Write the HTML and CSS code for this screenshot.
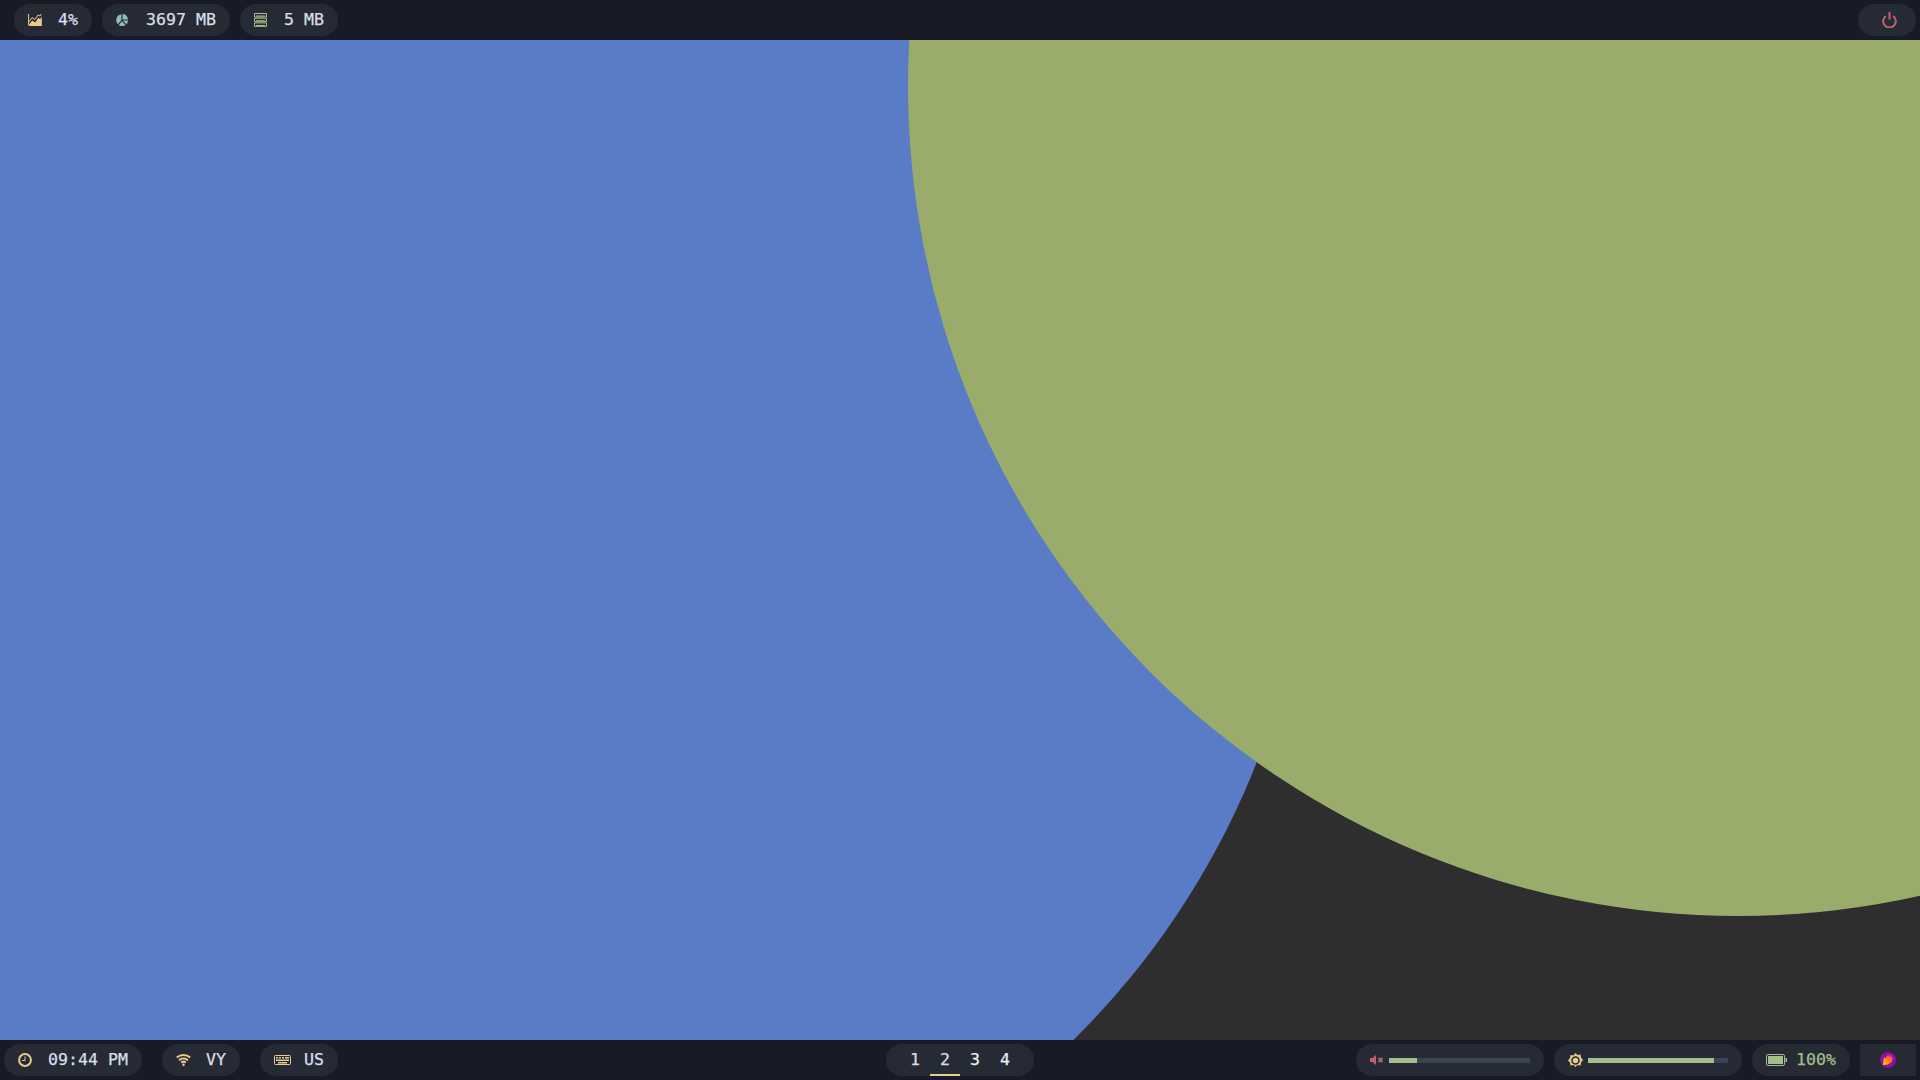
FILE: index.html
```html
<!doctype html>
<html lang="en">
<head>
  <meta charset="UTF-8">
  <meta name="viewport" content="width=device-width, initial-scale=1">
  <title>Desktop</title>
  <link rel="stylesheet" href="styles.css">
</head>
<body>

<header class="bar bar-top">
  <div class="group">
    <div class="pill stat w78">
      <svg width="14" height="12" viewBox="0 0 14 12">
        <path class="yellow-fill" d="M1.200 12V10.600L4.200 6.600l3 2 3-4.600 2 1L13.800 2.600V12z"/>
        <path class="yellow-line" d="M.6 0V11.400M.6 8.200L4 3.600l3 2L10 1l2 1L13.500 0"/>
      </svg>
      <span>4%</span>
    </div>
    <div class="pill stat w128">
      <svg width="12" height="12" viewBox="0 0 12 12">
        <path class="teal-fill" d="M5.300.2V6.200L1.800 10.200A6 6 0 0 1 5.300.2zM6.500 0A6 6 0 0 1 12 5.400H6.500zM6.600 6.500H12a6 6 0 0 1-1.600 3.800zM5.900 7.200l3.600 3.900A6 6 0 0 1 2.700 11z"/>
      </svg>
      <span>3697 MB</span>
    </div>
    <div class="pill stat w98">
      <svg width="13" height="14" viewBox="0 0 13 14">
        <path class="green-line" d="M.5.500h12v3.500H.5zM.5 5.200h12v3.500H.5zM.5 9.900h12v3.500H.5z"/>
        <path class="green-fill" d="M2 2.500h9v1H2zM2 7.200h9v1H2zM2 11.900h9v1H2z"/>
      </svg>
      <span>5 MB</span>
    </div>
  </div>
  <div class="group">
    <div class="pill pill-power">
      <svg width="15" height="16" viewBox="0 0 15 16">
        <path class="red-line wide" d="M3.800 4a6.300 6.300 0 1 0 7.400 0M7.500 0v7.500"/>
      </svg>
    </div>
  </div>
</header>

<div class="wallpaper">
  <svg width="1920" height="1000" viewBox="0 40 1920 1000">
    <rect y="40" width="1920" height="1000" fill="#2e2e2e"/>
    <circle cx="512" cy="470" r="800" fill="#5a7bc5"/>
    <circle cx="1738" cy="86" r="830" fill="#9aac6c"/>
  </svg>
</div>

<footer class="bar bar-bottom">
  <div class="group group-wide">
    <div class="pill stat w138">
      <svg width="14" height="14" viewBox="0 0 14 14">
        <circle class="yellow-line wide" cx="7" cy="7" r="5.900"/>
        <path class="yellow-line" d="M7 3.500V7.500H4"/>
      </svg>
      <span>09:44 PM</span>
    </div>
    <div class="pill stat w78">
      <svg width="15" height="12" viewBox="0 0 15 12">
        <path class="yellow-line wide" d="M.8 3.600a10 10 0 0 1 13.400 0M3 6.200a7 7 0 0 1 9 0M5.200 8.600a3.600 3.600 0 0 1 4.600 0"/>
        <circle class="yellow-fill" cx="7.500" cy="10.800" r="1.200"/>
      </svg>
      <span>VY</span>
    </div>
    <div class="pill stat w78">
      <svg width="17" height="10" viewBox="0 0 17 10">
        <rect class="yellow-line" x=".5" y=".5" width="16" height="9" rx="1"/>
        <path class="yellow-fill" d="M2 2h2v1.500H2zM5 2h2v1.500H5zM8 2h2v1.500H8zM11 2h4v1.500h-4zM2 4.500h13V6H2zM4 7h9v1.500H4z"/>
      </svg>
      <span>US</span>
    </div>
  </div>

  <nav class="pill workspaces">
    <span class="ws">1</span>
    <span class="ws ws-active">2</span>
    <span class="ws ws-bright">3</span>
    <span class="ws ws-bright">4</span>
  </nav>

  <div class="group group-right">
    <div class="pill pill-slider">
      <svg class="slider-icon" width="14" height="10" viewBox="0 0 14 10">
        <path class="red-fill" d="M0 3h2.500L6 0v10L2.500 7H0z"/>
        <path class="red-line wide" d="M8.500 3l4 4M12.500 3l-4 4"/>
      </svg>
      <div class="track"><div class="fill" style="width: 20%"></div></div>
    </div>
    <div class="pill pill-slider">
      <svg class="slider-icon" width="15" height="15" viewBox="0 0 15 15">
        <path class="yellow-fill" d="M7.500 0l2 2 3-.5.500 3 2 2.500-2 2.500-.5 3-3-.5-2 2-2-2-3 .5-.5-3L0 7.500 2 5l.5-3 3 .5z"/>
        <circle cx="7.500" cy="7.500" r="3.500" class="pill-line"/>
      </svg>
      <div class="track"><div class="fill" style="width: 90%"></div></div>
    </div>
    <div class="pill pill-battery">
      <svg width="21" height="12" viewBox="0 0 21 12">
        <rect class="green-line" x=".5" y=".5" width="18" height="11" rx="1.500"/>
        <rect class="green-fill" x="2" y="2" width="15" height="8"/>
        <rect class="green-fill" x="19.500" y="4" width="1.500" height="4"/>
      </svg>
      <span>100%</span>
    </div>
    <div class="launcher">
      <svg width="16" height="16" viewBox="0 0 16 16">
        <defs>
          <linearGradient id="flame" x1="0" y1="1" x2="1" y2="0">
            <stop offset="0" stop-color="#ffd400"/>
            <stop offset=".5" stop-color="#ff7a1a"/>
            <stop offset="1" stop-color="#f0409a"/>
          </linearGradient>
        </defs>
        <circle cx="8" cy="8" r="8" fill="#8f0fa5"/>
        <path fill="url(#flame)" d="M3 13l.5-6 1.500-2 .5 1.500L8.500 2 9 5l2.500-2.500-.5 3.500 2-1-1 4.500-4 3z"/>
      </svg>
    </div>
  </div>
</footer>

</body>
</html>
```

FILE: styles.css
```css
* {
    margin: 0;
    padding: 0;
    box-sizing: border-box;
}

html, body {
    height: 100%;
    background-color: #181b25;
    overflow: hidden;
}

body {
    display: flex;
    flex-direction: column;
    font-family: "DejaVu Sans Mono", monospace;
    font-size: 16.6px;
    color: #d8dee9;
    -webkit-text-stroke: .25px currentColor;
}

.bar {
    height: 40px;
    flex-shrink: 0;
    display: flex;
    align-items: center;
    background-color: #181b25;
}

.bar-top {
    justify-content: space-between;
    padding: 0 4px 0 14px;
}

.bar-bottom {
    display: grid;
    grid-template-columns: 1fr auto 1fr;
    padding: 0 4px;
}

.wallpaper {
    height: 1000px;
    flex-shrink: 0;
    line-height: 0;
}

.group {
    display: flex;
    gap: 10px;
}

.group-wide {
    gap: 20px;
}

.group-right {
    justify-content: flex-end;
}

.pill {
    height: 32px;
    padding: 0 14px;
    display: flex;
    align-items: center;
    background-color: #262a35;
    border-radius: 16px;
}

.pill span {
    margin-bottom: 2px;
}

.stat {
    display: grid;
    grid-template-columns: 30px auto;
    align-items: center;
}

.w78 { width: 78px; }
.w98 { width: 98px; }
.w128 { width: 128px; }
.w138 { width: 138px; }

.pill-power {
    width: 58px;
    padding: 0 0 0 4px;
    justify-content: center;
}

.workspaces {
    width: 148px;
}

.workspaces .ws {
    width: 30px;
    height: 32px;
    margin: 0;
    line-height: 31px;
    text-align: center;
}

.ws-bright {
    color: #eceff4;
}

.ws-active {
    border-bottom: 2px solid #ebcb8b;
}

.pill-slider {
    width: 188px;
}

.slider-icon {
    margin-right: 5px;
    flex-shrink: 0;
}

.track {
    flex: 1;
    height: 5px;
    background-color: #3b4454;
}

.fill {
    height: 100%;
    background-color: #a3be8c;
}

.pill-battery {
    width: 98px;
    gap: 9px;
    color: #a3be8c;
}

.pill-battery svg {
    flex-shrink: 0;
}

.launcher {
    width: 56px;
    height: 32px;
    display: flex;
    align-items: center;
    justify-content: center;
    background-color: #262a35;
}

.yellow-fill { fill: #ebcb8b; }
.teal-fill { fill: #8fbcbb; }
.green-fill { fill: #a3be8c; }
.red-fill { fill: #bf616a; }

.yellow-line, .green-line, .red-line, .pill-line {
    fill: none;
    stroke-width: 1;
}

.yellow-line { stroke: #ebcb8b; }
.green-line { stroke: #a3be8c; }
.red-line { stroke: #bf616a; }
.pill-line { stroke: #262a35; stroke-width: 1.6; }

.wide { stroke-width: 2; }
```
